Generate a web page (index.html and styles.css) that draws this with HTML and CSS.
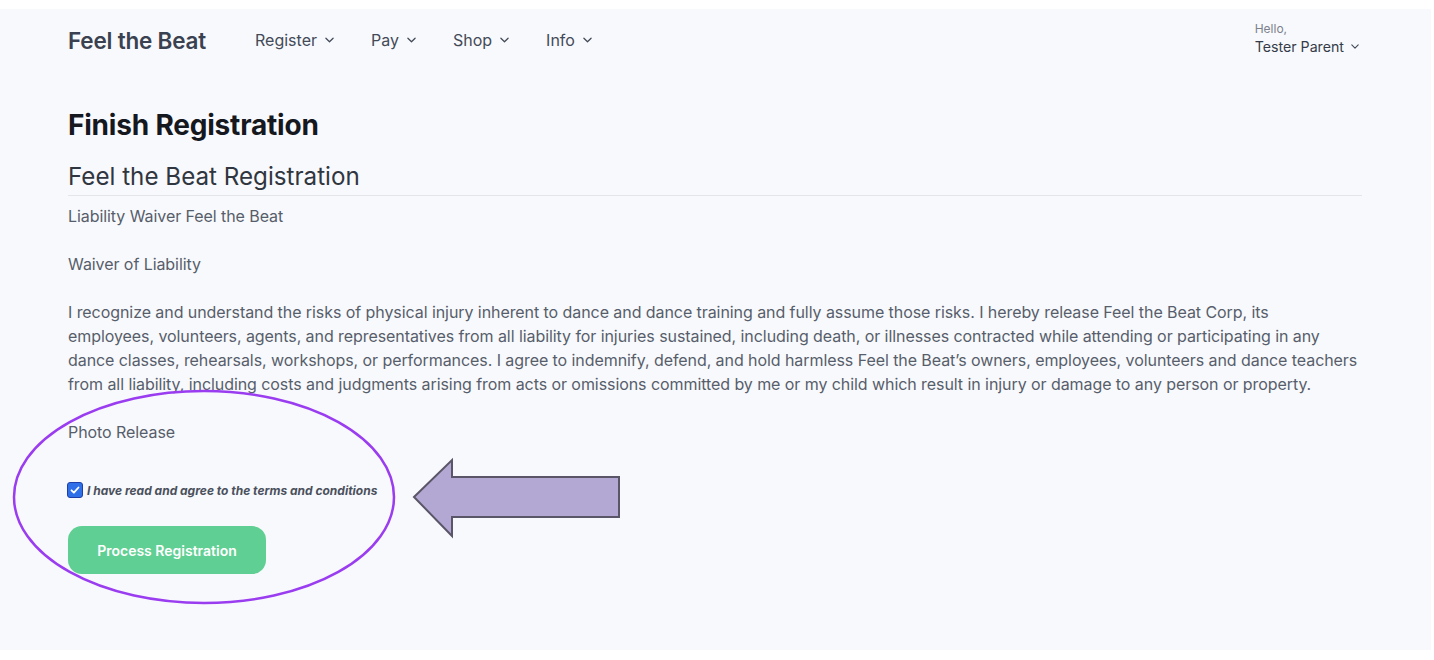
FILE: index.html
```html
<!DOCTYPE html>
<html>
<head>
<meta charset="utf-8">
<link rel="stylesheet" href="styles.css">
</head>
<body>
<div class="frame">
  <header class="topbar">
    <div class="brand">Feel the Beat</div>
    <nav class="nav">
      <span class="nav-item">Register <svg class="chev" viewBox="0 0 10 6"><path d="M1 1l4 4 4-4"/></svg></span>
      <span class="nav-item">Pay <svg class="chev" viewBox="0 0 10 6"><path d="M1 1l4 4 4-4"/></svg></span>
      <span class="nav-item">Shop <svg class="chev" viewBox="0 0 10 6"><path d="M1 1l4 4 4-4"/></svg></span>
      <span class="nav-item">Info <svg class="chev" viewBox="0 0 10 6"><path d="M1 1l4 4 4-4"/></svg></span>
    </nav>
    <div class="user">
      <div class="hello">Hello,</div>
      <div class="uname">Tester Parent <svg class="chev small" viewBox="0 0 10 6"><path d="M1 1l4 4 4-4"/></svg></div>
    </div>
  </header>
  <main class="content">
    <h1 class="title">Finish Registration</h1>
    <h2 class="subtitle">Feel the Beat Registration</h2>
    <div class="waiver">
      <p>Liability Waiver Feel the Beat</p>
      <p>Waiver of Liability</p>
      <p class="body-text">I recognize and understand the risks of physical injury inherent to dance and dance training and fully assume those risks. I hereby release Feel the Beat Corp, its employees, volunteers, agents, and representatives from all liability for injuries sustained, including death, or illnesses contracted while attending or participating in any dance classes, rehearsals, workshops, or performances. I agree to indemnify, defend, and hold harmless Feel the Beat’s owners, employees, volunteers and dance teachers from all liability, including costs and judgments arising from acts or omissions committed by me or my child which result in injury or damage to any person or property.</p>
      <p>Photo Release</p>
    </div>
    <label class="agree">
      <span class="box"><svg viewBox="0 0 12 12"><path d="M2.5 6.3l2.4 2.4 4.6-5.2"/></svg></span>
      <span class="agree-text">I have read and agree to the terms and conditions</span>
    </label>
    <button class="btn">Process Registration</button>
  </main>
  <svg class="annot" width="1431" height="641" viewBox="0 0 1431 641">
    <ellipse cx="204" cy="488" rx="190" ry="106" fill="none" stroke="#9a3cf0" stroke-width="2.5"/>
    <path d="M414 488 L452 451 L452 468 L619 468 L619 508 L452 508 L452 527 Z" fill="#b3a7d4" stroke="#5b5667" stroke-width="2"/>
  </svg>
</div>
</body>
</html>
```
FILE: styles.css
```css
* { box-sizing: border-box; }
html, body { margin: 0; padding: 0; background: #ffffff; }
body { font-family: Inter, "Noto Sans", sans-serif; }

.frame {
  position: relative;
  margin-top: 9px;
  width: 1431px;
  height: 641px;
  background: #f8f9fc;
  overflow: hidden;
}

.topbar {
  display: flex;
  align-items: center;
  height: 62px;
  padding: 0 72px 0 68px;
}
.brand {
  font-size: 22.5px;
  font-weight: 600;
  color: #3a4150;
  letter-spacing: -0.2px;
}
.nav {
  display: flex;
  gap: 37px;
  margin-left: 49px;
}
.nav-item {
  display: flex;
  align-items: center;
  gap: 8px;
  font-size: 16px;
  color: #434a58;
}
.chev {
  width: 9px;
  height: 6px;
  fill: none;
  stroke: #434a58;
  stroke-width: 1.4;
  stroke-linecap: round;
  stroke-linejoin: round;
}
.chev.small { width: 8px; height: 5px; }
.user {
  margin-left: auto;
  margin-top: -2px;
}
.hello {
  font-size: 12px;
  color: #7b818c;
  line-height: 14px;
}
.uname {
  display: flex;
  align-items: center;
  gap: 7px;
  font-size: 14.2px;
  color: #353c49;
  line-height: 20px;
  margin-top: 1px;
}

.content {
  padding: 0 69px 0 68px;
}
.title {
  margin: 37px 0 0;
  font-size: 28px;
  line-height: 34px;
  font-weight: 700;
  color: #15181e;
  letter-spacing: -0.2px;
}
.subtitle {
  margin: 19px 0 0;
  font-size: 24.2px;
  line-height: 32px;
  font-weight: 400;
  color: #30363f;
  padding-bottom: 2px;
  border-bottom: 1px solid #e3e5ea;
}
.waiver { margin-top: 8px; }
.waiver p {
  margin: 0 0 24px;
  font-size: 16px;
  line-height: 24px;
  color: #575e6b;
  letter-spacing: -0.07px;
}
.waiver .body-text { max-width: 1290px; }
.agree {
  display: flex;
  align-items: center;
  gap: 4px;
  margin-top: 38px;
  margin-left: -1px;
}
.box {
  width: 16px;
  height: 16px;
  border: 1.5px solid #1e3fa8;
  border-radius: 3px;
  background: #2f6fe8;
  display: flex;
  align-items: center;
  justify-content: center;
}
.box svg {
  width: 12px;
  height: 12px;
  fill: none;
  stroke: #ffffff;
  stroke-width: 1.8;
  stroke-linecap: round;
  stroke-linejoin: round;
}
.agree-text {
  font-size: 12px;
  font-weight: 700;
  font-style: italic;
  color: #4a505c;
}
.btn {
  display: block;
  margin-top: 28px;
  width: 198px;
  height: 48px;
  border: none;
  border-radius: 14px;
  background: #5fcf93;
  color: #ffffff;
  font-family: Inter, "Noto Sans", sans-serif;
  font-size: 14px;
  font-weight: 600;
}

.annot {
  position: absolute;
  left: 0;
  top: 0;
  pointer-events: none;
}
```
